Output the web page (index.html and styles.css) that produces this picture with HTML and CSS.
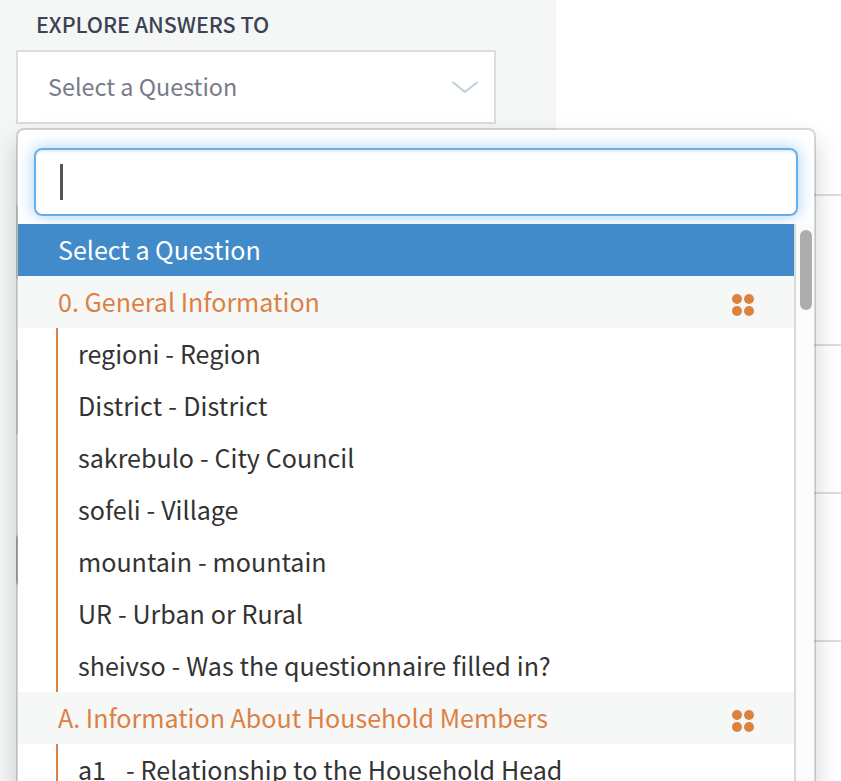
FILE: index.html
```html
<!DOCTYPE html>
<html lang="en">
<head>
<meta charset="utf-8">
<title>Explore answers</title>
<link rel="stylesheet" href="styles.css">
</head>
<body>
<div class="page">
  <aside class="sidebar">
    <div class="label">EXPLORE ANSWERS TO</div>
    <div class="select">
      <span>Select a Question</span>
      <svg class="chevron" width="28" height="16" viewBox="0 0 28 16"><path d="M1.500 2 14 12 26.500 2" fill="none" stroke="#b7d2d9" stroke-width="2"/></svg>
    </div>
    <div class="field first"></div>
    <div class="field second"></div>
    <div class="field button"></div>
  </aside>
  <main class="results">
    <div class="line l1"></div>
    <div class="line l2"></div>
    <div class="line l3"></div>
    <div class="line l4"></div>
  </main>
</div>
<div class="dropdown">
  <div class="search"><span class="caret"></span></div>
  <div class="menu">
    <ul class="options">
      <li class="active"><span>Select a Question</span></li>
      <li class="group"><span>0. General Information</span><svg class="dots" width="22" height="22" viewBox="0 0 22 22"><circle cx="5" cy="5" r="5"/><circle cx="17" cy="5" r="5"/><circle cx="5" cy="17" r="5"/><circle cx="17" cy="17" r="5"/></svg></li>
      <li class="item"><span>regioni - Region</span></li>
      <li class="item wide"><span>District - District</span></li>
      <li class="item"><span>sakrebulo - City Council</span></li>
      <li class="item"><span>sofeli - Village</span></li>
      <li class="item"><span>mountain - mountain</span></li>
      <li class="item"><span>UR - Urban or Rural</span></li>
      <li class="item"><span>sheivso - Was the questionnaire filled in?</span></li>
      <li class="group"><span>A. Information About Household Members</span><svg class="dots" width="22" height="22" viewBox="0 0 22 22"><circle cx="5" cy="5" r="5"/><circle cx="17" cy="5" r="5"/><circle cx="5" cy="17" r="5"/><circle cx="17" cy="17" r="5"/></svg></li>
      <li class="item"><span class="code">a1&nbsp;&nbsp; </span><span>- Relationship to the Household Head</span></li>
    </ul>
    <div class="track"><div class="thumb"></div></div>
  </div>
</div>
</body>
</html>
```
FILE: styles.css
```css
* { box-sizing: border-box; }
html, body { margin: 0; height: 781px; overflow: hidden; }
body {
  position: relative;
  background: #fff;
  font-family: "Noto Sans CJK SC", "Open Sans", sans-serif;
  color: #333;
}
.page { display: flex; height: 781px; }
.sidebar { width: 556px; padding: 0 60px 0 16px; background: #f5f7f6; }
.label {
  height: 50px;
  padding-left: 20px;
  line-height: 48px;
  font-size: 21.49px;
  font-weight: 500;
  letter-spacing: -.03px;
  color: #3c4354;
}
.select {
  display: flex;
  align-items: center;
  justify-content: space-between;
  height: 74px;
  padding: 0 15px 0 30px;
  border: 2px solid #dcdcdc;
  background: #fff;
  font-size: 23.4px;
  line-height: 34px;
  color: #777c88;
}
.select span { margin-top: -2px; }
.chevron { margin-top: 1px; }
.field { height: 74px; border: 2px solid #dcdcdc; background: #fff; }
.first { margin-top: 81px; }
.second { margin-top: 81px; }
.button { height: 54px; margin-top: 99px; border-color: #bbb; border-radius: 6px; }
.results { flex: 1; }
.line { height: 2px; background: #ddd; }
.l1 { margin-top: 194px; }
.l2 { margin-top: 148px; }
.l3, .l4 { margin-top: 146px; }
.dropdown {
  position: absolute;
  left: 16px;
  top: 128px;
  width: 800px;
  height: 800px;
  padding-top: 18px;
  border: 2px solid rgba(0, 0, 0, .15);
  border-radius: 8px;
  background: #fff;
  background-clip: padding-box;
  box-shadow: 0 12px 24px rgba(0, 0, 0, .175);
}
.search {
  display: flex;
  align-items: center;
  height: 68px;
  margin: 0 16px 8px;
  padding-left: 24px;
  border: 2px solid #66afe9;
  border-radius: 8px;
  box-shadow: inset 0 2px 2px rgba(0, 0, 0, .075), 0 0 16px rgba(102, 175, 233, .6);
}
.caret { width: 3px; height: 36px; background: #555; }
.menu { position: relative; display: flex; height: 700px; background: #fff; }
.options { width: 776px; margin: 0; padding: 0; list-style: none; }
.options li { display: flex; height: 52px; line-height: 50px; font-size: 25.07px; white-space: pre; }
.active { padding-left: 40px; background: #428bca; color: #fff; }
.group {
  justify-content: space-between;
  padding: 0 40px;
  background: #f6f8f8;
  color: #dd8143;
}
.dots { margin-top: 18px; fill: #dd8143; }
.options .item { margin-left: 38px; padding-left: 20px; border-left: 2px solid #dd8143; word-spacing: .3px; }
.options .wide { letter-spacing: .12px; }
.code { width: 48px; }
.track { width: 20px; padding: 6px 2px 0 4px; border-left: 2px solid #d9d9d9; background: #fbfbfb; }
.thumb { width: 12px; height: 80px; border-radius: 6px; background: #adadad; }
```
